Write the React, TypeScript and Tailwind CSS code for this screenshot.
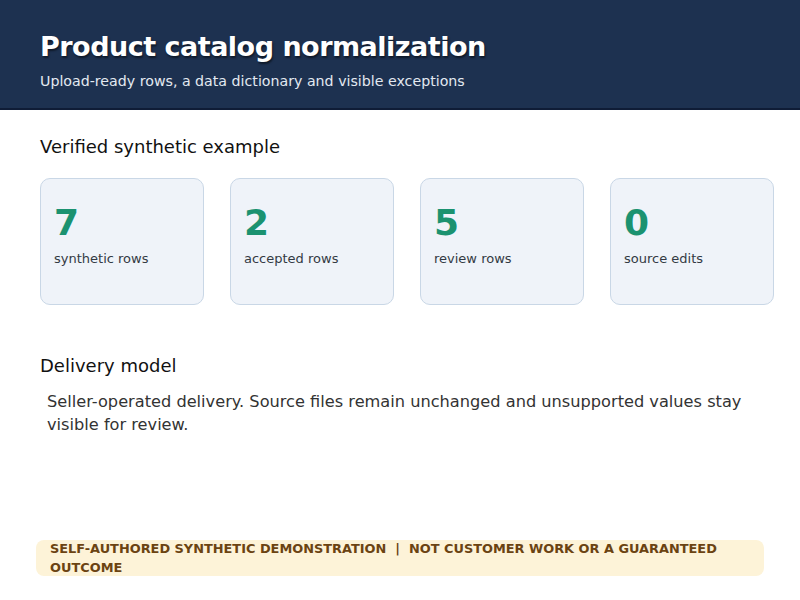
import React from 'react';

const stats = [
  { value: '7', label: 'synthetic rows' },
  { value: '2', label: 'accepted rows' },
  { value: '5', label: 'review rows' },
  { value: '0', label: 'source edits' },
];

const StatCard: React.FC<{ value: string; label: string }> = ({ value, label }) => (
  <div className="h-[127px] rounded-[10px] border border-[#c9d7e6] bg-[#eff3f9] px-[13px] pt-[24px]">
    <div className="text-[36px] font-bold leading-[40px] text-[#1b9270]">{value}</div>
    <div className="mt-[6px] text-[13px] text-[#333a44]">{label}</div>
  </div>
);

const App: React.FC = () => {
  return (
    <div className="flex h-[600px] w-[800px] flex-col bg-white font-['DejaVu_Sans',sans-serif]">
      {/* Header */}
      <header className="h-[110px] border-b-2 border-[#0f1c36] bg-[#1d3150] px-[40px] pt-[28px]">
        <h1 className="text-[27px] font-bold leading-[38px] tracking-[-0.5px] text-white [text-shadow:1px_2px_2px_rgba(0,0,0,0.5)]">
          Product catalog normalization
        </h1>
        <p className="mt-[5px] text-[14.2px] text-[#e3e9f1]">
          Upload-ready rows, a data dictionary and visible exceptions
        </p>
      </header>

      {/* Verified synthetic example */}
      <section className="px-[40px] pt-[23px]">
        <h2 className="text-[18px] font-normal text-[#111]">Verified synthetic example</h2>
        <div className="mt-[18px] grid w-[734px] grid-cols-4 gap-[26px]">
          {stats.map((s) => (
            <StatCard key={s.label} value={s.value} label={s.label} />
          ))}
        </div>
      </section>

      {/* Delivery model */}
      <section className="px-[40px] pt-[47px]">
        <h2 className="text-[18px] font-normal text-[#111]">Delivery model</h2>
        <p className="mt-[11px] pl-[7px] text-[16.2px] leading-[23px] text-[#333]">
          Seller-operated delivery. Source files remain unchanged and unsupported values stay visible for review.
        </p>
      </section>

      {/* Footer notice */}
      <div className="mt-auto mb-[24px] px-[36px]">
        <div className="flex h-[36px] items-center rounded-[8px] bg-[#fdf3d8] px-[14px] text-[12.9px] font-semibold text-[#6b4312]">
          SELF-AUTHORED SYNTHETIC DEMONSTRATION&nbsp; |&nbsp; NOT CUSTOMER WORK OR A GUARANTEED OUTCOME
        </div>
      </div>
    </div>
  );
};

export default App;
